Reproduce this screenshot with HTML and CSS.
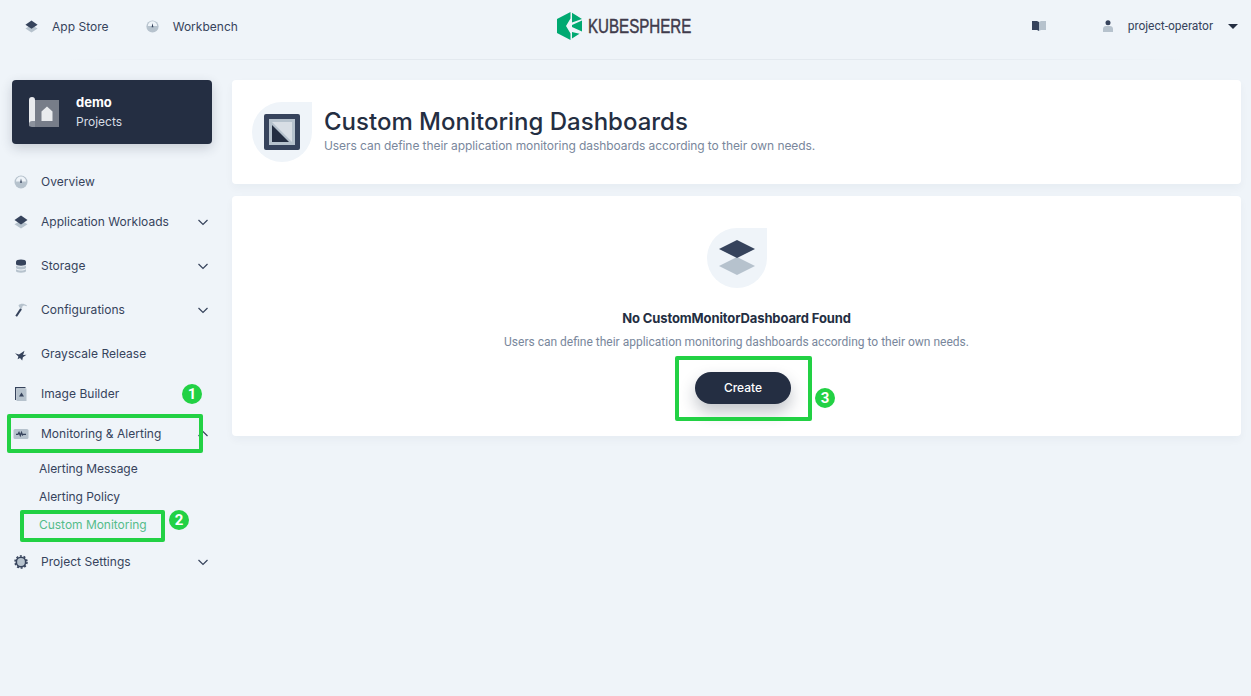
FILE: index.html
```html
<!DOCTYPE html>
<html lang="en">
<head>
    <meta charset="UTF-8">
    <meta name="viewport" content="width=device-width, initial-scale=1.0">
    <title>Custom Monitoring Dashboards</title>
    <link rel="stylesheet" href="styles.css">
</head>
<body>
    <svg class="icon-defs" width="0" height="0">
        <symbol id="i-layers" viewBox="0 0 16 16">
            <path fill="#b6c2cd" d="M8 6.500 14.500 10.200 8 14.500 1.500 10.200z"/>
            <path fill="#36435c" d="M8 1.500 14.500 6 8 10.500 1.500 6z"/>
        </symbol>
        <symbol id="i-dash" viewBox="0 0 16 16">
            <circle cx="8" cy="8" r="6.500" fill="#b6c2cd"/>
            <path fill="#eff4f9" d="M3 7.500a5 5 0 0 1 10 0z"/>
            <path fill="#36435c" d="M7 8.800 8 4.500l1 4.300z"/>
        </symbol>
        <symbol id="i-storage" viewBox="0 0 16 16">
            <path fill="#36435c" d="M3 3.500C3 2.200 5.200 1.500 8 1.500s5 .7 5 2V6c0 1-2.200 1.700-5 1.700S3 7 3 6z"/>
            <path fill="#b6c2cd" d="M3 7.500c1.100.8 3 1.200 5 1.200s3.900-.4 5-1.200v2.300c0 1-2.200 1.700-5 1.700s-5-.7-5-1.700zM3 11.300c1.100.8 3 1.200 5 1.200s3.900-.4 5-1.200V13c0 1-2.200 1.700-5 1.700S3 14 3 13z"/>
        </symbol>
        <symbol id="i-hammer" viewBox="0 0 16 16">
            <path fill="#36435c" d="M7.200 6.200 8.900 7.500 4 14.700l-1.700-.9z"/>
            <path fill="#b6c2cd" d="M5.500 3.200C7.500 1.400 10.600 1 14 3.500l-.6.800c-2-1-3.200-.9-4 .1l-.5 2.600-2.600-1.800z"/>
        </symbol>
        <symbol id="i-bird" viewBox="0 0 16 16">
            <path fill="#36435c" d="M2 7.200 6 8.500l5.500-3.700-1.400 4.300 3.400-.3-3.600 2.400-.7 3.300-2.200-2.500-2.400 1.200.8-2.700z"/>
        </symbol>
        <symbol id="i-image" viewBox="0 0 16 16">
            <path fill="#36435c" d="M2 1h10.500v1.200H3.200V14H2z"/>
            <path fill="#b6c2cd" d="M3.500 2.500h10V15h-10z"/>
            <path fill="#36435c" d="M8.500 6.500 11 10.500H6z"/>
        </symbol>
        <symbol id="i-monitor" viewBox="0 0 16 16">
            <rect x=".5" y="3" width="15" height="10" rx="1.500" fill="#b6c2cd"/>
            <path fill="none" stroke="#36435c" stroke-width="1.300" d="M3 8.300h2l1-1.800 1.300 3 1.200-3 1 2.400.8-.6H13"/>
        </symbol>
        <symbol id="i-gear" viewBox="0 0 16 16">
            <circle cx="8" cy="8" r="4.700" fill="#b6c2cd" stroke="#36435c" stroke-width="1.600"/>
            <circle cx="8" cy="8" r="6" fill="none" stroke="#36435c" stroke-width="1.500" stroke-dasharray="2 1.770"/>
        </symbol>
        <symbol id="i-chev" viewBox="0 0 16 16">
            <path fill="none" stroke="#36435c" stroke-width="1.200" d="m3.500 6 4.500 4.500L12.500 6"/>
        </symbol>
    </svg>

    <header class="topbar">
        <div class="topbar-left">
            <a class="top-link"><svg class="ico"><use href="#i-layers"/></svg>App Store</a>
            <a class="top-link"><svg class="ico"><use href="#i-dash"/></svg>Workbench</a>
        </div>
        <div class="logo">
            <svg class="logo-mark" viewBox="0 0 25 28">
                <path fill="#00a971" d="M0 7 13.500 0v6.500L9 14l4.500 7.500V28L0 21z"/>
                <path fill="#00a971" d="M15 .8 25 7 15 10.500zM15 13 25 8.500v11L15 15zM15 20l7.500 1.800L15 26.500z"/>
            </svg>
            <span class="logo-text">KUBESPHERE</span>
        </div>
        <div class="topbar-right">
            <svg class="book" viewBox="0 0 14 10"><path fill="#36435c" d="M0 0h5l2 1v9L5 9H0z"/><path fill="#b6c2cd" d="M7 1l2-1h5v9H9l-2 1z"/></svg>
            <div class="user">
                <svg class="user-ico" viewBox="0 0 10 12"><circle cx="5" cy="2.700" r="2.500" fill="#36435c"/><path fill="#b6c2cd" d="M0 12V9c0-1.800 1.500-3 3-3h4c1.500 0 3 1.200 3 3v3z"/></svg>
                <span>project-operator</span>
                <i class="caret"></i>
            </div>
        </div>
    </header>

    <div class="layout">
        <aside class="sidebar">
            <div class="project-card">
                <svg class="project-ico" viewBox="0 0 30 30">
                    <path fill="#fff" fill-opacity=".38" d="M6 3h24v27H6z"/>
                    <path fill="#e9ebee" d="M0 3c0-2 1-3 3-3s3 1 3 3v24H3c-1.500 0-3 1-3 3z"/>
                    <path fill="#8b919c" d="M0 27c0-2 1.500-3 3-3h3v6H3c-2 0-3-1-3-3z"/>
                    <path fill="#e9ebee" d="M12.500 14.500 18 9.500l5.500 5v9.500h-11z"/>
                </svg>
                <div>
                    <div class="project-name">demo</div>
                    <div class="project-type">Projects</div>
                </div>
            </div>
            <nav class="menu">
                <div class="menu-item"><svg class="ico"><use href="#i-dash"/></svg>Overview</div>
                <div class="menu-item has-sub"><svg class="ico"><use href="#i-layers"/></svg>Application Workloads<svg class="chev"><use href="#i-chev"/></svg></div>
                <div class="menu-item has-sub"><svg class="ico"><use href="#i-storage"/></svg>Storage<svg class="chev"><use href="#i-chev"/></svg></div>
                <div class="menu-item has-sub"><svg class="ico"><use href="#i-hammer"/></svg>Configurations<svg class="chev"><use href="#i-chev"/></svg></div>
                <div class="menu-item"><svg class="ico"><use href="#i-bird"/></svg>Grayscale Release</div>
                <div class="menu-item"><svg class="ico"><use href="#i-image"/></svg>Image Builder</div>
                <div class="menu-item"><svg class="ico"><use href="#i-monitor"/></svg>Monitoring &amp; Alerting<svg class="chev up"><use href="#i-chev"/></svg></div>
                <ul class="submenu">
                    <li>Alerting Message</li>
                    <li>Alerting Policy</li>
                    <li class="active">Custom Monitoring</li>
                </ul>
                <div class="menu-item"><svg class="ico"><use href="#i-gear"/></svg>Project Settings<svg class="chev"><use href="#i-chev"/></svg></div>
            </nav>
        </aside>

        <main class="content">
            <section class="card page-head">
                <div class="drop">
                    <svg class="drop-ico" viewBox="0 0 36 36">
                        <rect width="36" height="36" rx="2" fill="#36435c"/>
                        <rect x="5" y="5" width="26" height="26" fill="#b6c2cd"/>
                        <path fill="#d8dee5" d="M8 8h20v20z"/>
                        <path fill="#242e42" d="M8 11 25 28H8z"/>
                    </svg>
                </div>
                <div class="page-head-text">
                    <h1>Custom Monitoring Dashboards</h1>
                    <p>Users can define their application monitoring dashboards according to their own needs.</p>
                </div>
            </section>
            <section class="card empty">
                <div class="drop">
                    <svg class="drop-ico-lg" viewBox="0 0 36 36">
                        <path fill="#b6c2cd" d="M18 17 36 26 18 35 0 26z"/>
                        <path fill="#36435c" d="M18 0 36 9 18 18 0 9z"/>
                    </svg>
                </div>
                <h2>No CustomMonitorDashboard Found</h2>
                <p>Users can define their application monitoring dashboards according to their own needs.</p>
                <button class="btn-create">Create</button>
            </section>
        </main>
    </div>

    <!-- green tutorial marks drawn over the screenshot -->
    <div class="mark mark-menu"></div>
    <div class="mark mark-sub"></div>
    <div class="mark mark-btn"></div>
    <div class="step step-1">1</div>
    <div class="step step-2">2</div>
    <div class="step step-3">3</div>
</body>
</html>
```

FILE: styles.css
```css
* {
    box-sizing: border-box;
}
html, body {
    height: 100%;
}
body {
    margin: 0;
    position: relative;
    background-color: #eff4f9;
    font-family: Inter, Roboto, "Liberation Sans", sans-serif;
    font-size: 12px;
    color: #36435c;
    overflow: hidden;
}
.icon-defs {
    position: absolute;
}
.ico {
    width: 16px;
    height: 16px;
    flex: none;
}

/* top bar */
.topbar {
    height: 60px;
    display: grid;
    grid-template-columns: 1fr auto 1fr;
    align-items: center;
    padding: 0 13px 8px 24px;
    background: linear-gradient(90deg, transparent 5%, #e3e9ef 25%, #e3e9ef 75%, transparent 95%) bottom / 100% 1px no-repeat;
}
.topbar-left {
    display: flex;
    gap: 36px;
}
.top-link {
    display: flex;
    align-items: center;
    gap: 13px;
    letter-spacing: .03px;
}
.top-link .ico {
    width: 15px;
    height: 15px;
}
.logo {
    display: flex;
    align-items: center;
    gap: 6px;
    margin-right: 14px;
}
.logo-mark {
    width: 25px;
    height: 28px;
}
.logo-text {
    width: 104px;
    font-family: "Liberation Sans", sans-serif;
    font-size: 21px;
    white-space: nowrap;
    color: #3f3b4b;
    -webkit-text-stroke: .5px #3f3b4b;
    transform: scaleX(.72);
    transform-origin: left center;
}
.topbar-right {
    display: flex;
    justify-content: flex-end;
    align-items: center;
    gap: 57px;
}
.book {
    width: 14px;
    height: 10px;
}
.user {
    display: flex;
    align-items: center;
    font-family: Roboto, sans-serif;
}
.user-ico {
    width: 10px;
    height: 12px;
    margin-right: 15px;
}
.caret {
    width: 0;
    height: 0;
    margin-left: 15px;
    border-left: 5px solid transparent;
    border-right: 5px solid transparent;
    border-top: 5px solid #242e42;
}

/* page */
.layout {
    display: flex;
    padding: 20px 10px 0 12px;
    gap: 20px;
}
.sidebar {
    width: 200px;
    flex: none;
}
.project-card {
    height: 64px;
    display: flex;
    align-items: center;
    gap: 17px;
    padding-left: 17px;
    margin-bottom: 17px;
    background-color: #242e42;
    border-radius: 4px;
    box-shadow: 0 4px 12px rgba(36, 46, 66, 0.2);
    color: #fff;
}
.project-ico {
    width: 30px;
    height: 30px;
}
.project-name {
    font-size: 13px;
    font-weight: 700;
    line-height: 20px;
}
.project-type {
    line-height: 20px;
    color: #d8dee5;
}

.menu-item {
    height: 40px;
    display: flex;
    align-items: center;
    padding-left: 1px;
    letter-spacing: .03px;
    white-space: nowrap;
}
.menu-item .ico {
    margin: 2px 12px 0 0;
}
.menu-item.has-sub {
    height: 44px;
    padding-bottom: 4px;
}
.chev {
    width: 16px;
    height: 16px;
    margin: 2px 1px 0 auto;
}
.chev.up {
    transform: rotate(180deg);
}
.submenu {
    list-style: none;
    margin: 0;
    padding: 2px 0 2px 27px;
}
.submenu li {
    height: 28px;
    line-height: 28px;
    letter-spacing: -.03px;
}
.submenu .active {
    color: #55bc8a;
}

.content {
    flex: 1;
    display: flex;
    flex-direction: column;
    gap: 12px;
}
.card {
    background-color: #fff;
    border-radius: 4px;
    box-shadow: 0 4px 8px rgba(36, 46, 66, 0.04);
}
.drop {
    width: 60px;
    height: 60px;
    flex: none;
    display: flex;
    align-items: center;
    justify-content: center;
    background-color: #eff4f9;
    border-radius: 50% 0 50% 50%;
}
.drop-ico {
    width: 36px;
    height: 36px;
}
.drop-ico-lg {
    width: 36px;
    height: 36px;
}
.page-head {
    height: 104px;
    display: flex;
    align-items: center;
    gap: 12px;
    padding: 0 20px;
}
.page-head-text {
    padding-bottom: 5px;
}
.page-head h1 {
    margin: 0;
    font-size: 24px;
    font-weight: 500;
    line-height: 32px;
    color: #242e42;
}
.page-head p {
    margin: 0;
    line-height: 16px;
    letter-spacing: -.07px;
    color: #79879c;
}
.empty {
    height: 240px;
    display: flex;
    flex-direction: column;
    align-items: center;
    padding-top: 32px;
}
.empty h2 {
    margin: 20px 0 4px;
    font-size: 13px;
    font-weight: 700;
    line-height: 20px;
    letter-spacing: -.12px;
    color: #242e42;
}
.empty p {
    margin: 0;
    font-family: Roboto, sans-serif;
    line-height: 20px;
    color: #79879c;
}
.btn-create {
    width: 96px;
    height: 32px;
    margin: 20px 0 0 13px;
    padding-bottom: 2px;
    border: none;
    border-radius: 16px;
    background-color: #242e42;
    color: #fff;
    font: 500 12px Inter, Roboto, sans-serif;
    box-shadow: 0 8px 16px rgba(36, 46, 66, 0.28);
}

/* tutorial marks */
.mark {
    position: absolute;
    border: 4px solid #22d144;
    border-radius: 2px;
}
.mark-menu {
    left: 7px;
    top: 414px;
    width: 196px;
    height: 39px;
}
.mark-sub {
    left: 20px;
    top: 510px;
    width: 145px;
    height: 32px;
}
.mark-btn {
    left: 675px;
    top: 356px;
    width: 137px;
    height: 65px;
}
.step {
    position: absolute;
    width: 20px;
    height: 20px;
    border-radius: 50%;
    background-color: #22d144;
    color: #fff;
    font: 700 15px/20px Roboto, sans-serif;
    text-align: center;
}
.step-1 {
    left: 182px;
    top: 384px;
}
.step-2 {
    left: 169px;
    top: 510px;
}
.step-3 {
    left: 815px;
    top: 388px;
}
```
